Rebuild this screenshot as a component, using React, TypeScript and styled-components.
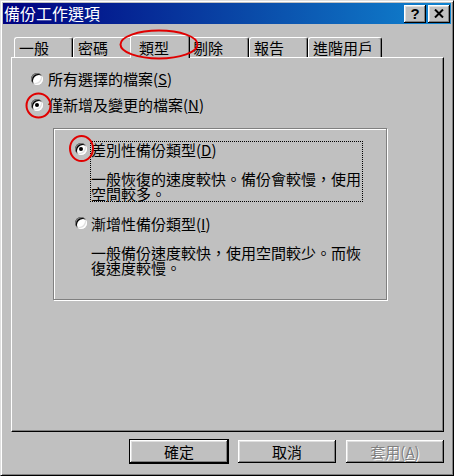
import React from 'react';
import styled, { createGlobalStyle } from 'styled-components';

const GlobalStyle = createGlobalStyle`
  html, body {
    margin: 0;
    padding: 0;
    background: #c0c0c0;
  }
  * {
    box-sizing: border-box;
  }
`;

const FONT = `"Noto Sans CJK TC", "Noto Sans CJK SC", "Liberation Sans", sans-serif`;

const Window = styled.div`
  position: relative;
  width: 454px;
  height: 476px;
  padding: 2px;
  background: #c0c0c0;
  border: 1px solid;
  border-color: #dfdfdf #000 #000 #dfdfdf;
  box-shadow: inset 1px 1px #fff, inset -1px -1px #808080;
  font-family: ${FONT};
  font-size: 15px;
  color: #000;
`;

const TitleBar = styled.div`
  display: flex;
  align-items: center;
  height: 21px;
  padding: 0 1px 0 1px;
  background: linear-gradient(90deg, #000080 0%, #0a4aa8 55%, #1084d0 100%);
`;

const Title = styled.div`
  flex: 1;
  color: #fff;
  font-size: 16px;
  line-height: 21px;
  white-space: nowrap;
`;

const TitleButton = styled.div<{ $gap?: number }>`
  display: flex;
  align-items: center;
  justify-content: center;
  width: 22px;
  height: 18px;
  margin-left: ${(p) => p.$gap ?? 0}px;
  background: #c0c0c0;
  box-shadow: inset -1px -1px #000, inset 1px 1px #fff, inset -2px -2px #808080,
    inset 2px 2px #dfdfdf;
  font-family: "Liberation Sans", sans-serif;
  font-weight: bold;
  font-size: 15px;
  line-height: 1;
`;

const TabStrip = styled.div`
  position: relative;
  z-index: 1;
  display: flex;
  align-items: flex-end;
  height: 22px;
  margin-top: 11px;
  padding-left: 11px;
`;

const Tab = styled.div<{ $w: number; $active?: boolean }>`
  position: relative;
  width: ${(p) => p.$w}px;
  height: ${(p) => (p.$active ? 23 : 20)}px;
  margin: ${(p) => (p.$active ? '0 -2px -1px -2px' : '0')};
  padding-left: ${(p) => (p.$active ? 8 : 4)}px;
  display: flex;
  align-items: center;
  background: #c0c0c0;
  border-left: 1px solid #fff;
  border-top: 1px solid #fff;
  border-right: 1px solid #000;
  border-radius: 3px 3px 0 0;
  box-shadow: inset -1px 0 #808080;
  line-height: 15px;
  white-space: nowrap;
  z-index: ${(p) => (p.$active ? 2 : 1)};
`;

const Panel = styled.div`
  width: 433px;
  height: 375px;
  margin-left: 8px;
  padding: 13px 0 0 19px;
  border: 1px solid;
  border-color: #fff #000 #000 #fff;
  box-shadow: inset -1px -1px #808080;
`;

const RadioRow = styled.div<{ $mt?: number }>`
  display: flex;
  align-items: flex-start;
  margin-top: ${(p) => p.$mt ?? 0}px;
  line-height: 16px;
  white-space: nowrap;
`;

const Radio = styled.span<{ $checked?: boolean; $mt?: number; $mr?: number }>`
  position: relative;
  flex: none;
  width: 12px;
  height: 12px;
  margin-top: ${(p) => p.$mt ?? 2}px;
  margin-right: ${(p) => p.$mr ?? 5}px;
  border-radius: 50%;
  background: #fff;
  box-shadow: inset 1px 1px #808080, inset -1px -1px #fff, inset 2px 2px #000,
    inset -2px -2px #dfdfdf;

  &::after {
    content: '';
    display: ${(p) => (p.$checked ? 'block' : 'none')};
    position: absolute;
    left: 4px;
    top: 4px;
    width: 4px;
    height: 4px;
    border-radius: 50%;
    background: #000;
  }
`;

const GroupBox = styled.div`
  width: 334px;
  height: 172px;
  margin: 15px 0 0 22px;
  padding: 12px 0 0 21px;
  border: 1px solid #808080;
  box-shadow: 1px 1px 0 #fff, inset 1px 1px 0 #fff;
`;

const Option = styled.div<{ $mt?: number }>`
  display: flex;
  align-items: flex-start;
  margin-top: ${(p) => p.$mt ?? 0}px;
`;

const OptionBody = styled.div<{ $focused?: boolean }>`
  width: 273px;
  margin-left: 3px;
  border: 1px dotted ${(p) => (p.$focused ? '#000' : 'transparent')};
  white-space: nowrap;
`;

const OptionLabel = styled.div`
  line-height: 16px;
`;

const OptionText = styled.div`
  margin-top: 13px;
  line-height: 15px;
`;

const ButtonRow = styled.div`
  display: flex;
  justify-content: flex-end;
  gap: 8px;
  margin-top: 7px;
  padding-right: 6px;
`;

const Button = styled.div<{ $default?: boolean; $disabled?: boolean }>`
  display: flex;
  align-items: center;
  justify-content: center;
  width: 100px;
  height: 25px;
  border: 1px solid ${(p) => (p.$default ? '#000' : 'transparent')};
  box-shadow: inset -1px -1px #000, inset 1px 1px #fff, inset -2px -2px #808080,
    inset 2px 2px #dfdfdf;
  color: ${(p) => (p.$disabled ? '#808080' : '#000')};
  text-shadow: ${(p) => (p.$disabled ? '1px 1px #fff' : 'none')};
  line-height: 15px;
`;

const Marks = styled.svg`
  position: absolute;
  left: 0;
  top: 0;
  pointer-events: none;
  z-index: 5;
`;

const tabs = [
  { label: '一般', w: 59 },
  { label: '密碼', w: 59 },
  { label: '類型', w: 60, active: true },
  { label: '剔除', w: 61 },
  { label: '報告', w: 59 },
  { label: '進階用戶', w: 74 },
];

export default function App() {
  return (
    <>
      <GlobalStyle />
      <Window>
        <TitleBar>
          <Title>備份工作選項</Title>
          <TitleButton>?</TitleButton>
          <TitleButton $gap={2}>
            <svg width="10" height="9" viewBox="0 0 10 9">
              <path d="M1 0.5 L9 8.5 M9 0.5 L1 8.5" stroke="#000" strokeWidth="2" />
            </svg>
          </TitleButton>
        </TitleBar>

        <TabStrip>
          {tabs.map((t) => (
            <Tab key={t.label} $w={t.w} $active={t.active}>
              {t.label}
            </Tab>
          ))}
        </TabStrip>

        <Panel>
          <RadioRow>
            <Radio />
            <span>
              所有選擇的檔案(<u>S</u>)
            </span>
          </RadioRow>
          <RadioRow $mt={10}>
            <Radio $checked />
            <span>
              僅新增及變更的檔案(<u>N</u>)
            </span>
          </RadioRow>

          <GroupBox>
            <Option>
              <Radio $checked $mt={2} $mr={0} />
              <OptionBody $focused>
                <OptionLabel>
                  差別性備份類型(<u>D</u>)
                </OptionLabel>
                <OptionText>
                  一般恢復的速度較快。備份會較慢，使用
                  <br />
                  空間較多。
                </OptionText>
              </OptionBody>
            </Option>
            <Option $mt={13}>
              <Radio $mt={2} $mr={0} />
              <OptionBody>
                <OptionLabel>
                  漸增性備份類型(<u>I</u>)
                </OptionLabel>
                <OptionText>
                  一般備份速度較快，使用空間較少。而恢
                  <br />
                  復速度較慢。
                </OptionText>
              </OptionBody>
            </Option>
          </GroupBox>
        </Panel>

        <ButtonRow>
          <Button $default>確定</Button>
          <Button>取消</Button>
          <Button $disabled>
            套用(<u>A</u>)
          </Button>
        </ButtonRow>

        <Marks width="454" height="476" viewBox="0 0 454 476">
          <ellipse cx="158" cy="43.5" rx="38.5" ry="14" fill="none" stroke="#e00000" strokeWidth="2" />
          <circle cx="37.5" cy="104.5" r="12" fill="none" stroke="#e00000" strokeWidth="2" />
          <ellipse cx="80.5" cy="147.5" rx="11.5" ry="12.5" fill="none" stroke="#e00000" strokeWidth="2" />
        </Marks>
      </Window>
    </>
  );
}
